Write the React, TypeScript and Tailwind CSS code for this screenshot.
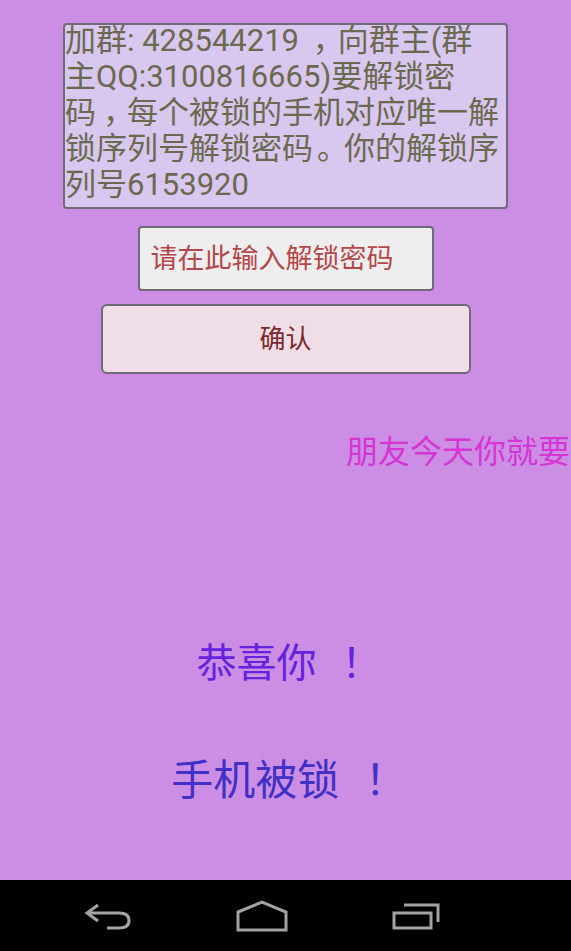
import React from "react";

const cjk = { fontFamily: '"Roboto", "Noto Sans CJK SC", sans-serif' };

function BackIcon() {
  return (
    <svg width="60" height="40" viewBox="0 0 60 40" fill="none" stroke="#a3a3a3" strokeWidth="3">
      <path d="M8 17 L40 17 Q50 17 50 24.5 Q50 32 40 32 L28 32" />
      <path d="M19 9 L8 17 L19 25" />
    </svg>
  );
}

function HomeIcon() {
  return (
    <svg width="60" height="40" viewBox="0 0 60 40" fill="none" stroke="#a3a3a3" strokeWidth="3">
      <path d="M6 16 L30 6 L54 16 L54 34 L6 34 Z" />
    </svg>
  );
}

function RecentsIcon() {
  return (
    <svg width="60" height="40" viewBox="0 0 60 40" fill="none" stroke="#a3a3a3" strokeWidth="3">
      <rect x="9" y="17" width="37" height="15" />
      <path d="M19 9 L53 9 L53 26" />
    </svg>
  );
}

export default function App() {
  return (
    <div className="flex h-[951px] w-[571px] flex-col overflow-hidden bg-[#cc8ee4]" style={cjk}>
      <div className="flex flex-1 flex-col items-center">
        {/* message box */}
        <div className="mt-[23px] h-[186px] w-[445px] overflow-hidden rounded-[4px] border-2 border-[#6e6a78] bg-[#d8c7ef] text-[31px] leading-[36px] text-[#6b6a4f]">
          <div className="-mt-[2px]">
            <div className="whitespace-nowrap">
              加群: 428544219 <span className="relative left-[6px]">，</span>向群主(群
            </div>
            <div className="whitespace-nowrap">主QQ:3100816665)要解锁密</div>
            <div className="whitespace-nowrap">
              码<span className="relative left-[7px]">，</span>每个被锁的手机对应唯一解
            </div>
            <div className="whitespace-nowrap">
              锁序列号解锁密码<span className="relative left-[4px]">。</span>你的解锁序
            </div>
            <div className="whitespace-nowrap">列号6153920</div>
          </div>
        </div>

        {/* password input */}
        <input
          className="mt-[17px] h-[65px] w-[296px] rounded-[4px] border-2 border-[#6e6a78] bg-[#efeeee] pl-[11px] text-[27px] text-[#7b2b2b] outline-none placeholder:text-[#b5474a]"
          placeholder="请在此输入解锁密码"
          style={cjk}
        />

        {/* confirm */}
        <button className="mt-[13px] h-[70px] w-[370px] rounded-[6px] border-2 border-[#6e6a78] bg-[#efdde7] text-[26px] text-[#7b2b2b]">
          确认
        </button>

        {/* scrolling line */}
        <div className="mt-[58px] w-full overflow-hidden whitespace-nowrap pl-[346px] text-[32px] leading-[40px] text-[#d535d5]">
          朋友今天你就要
        </div>

        <div className="mt-[168px] text-[40px] leading-[48px] text-[#6622dd]">
          恭喜你 <span className="relative left-[7px] ml-[8px]">！</span>
        </div>
        <div className="mt-[68px] text-[42px] leading-[50px] text-[#4030c6]">
          手机被锁 <span className="relative left-[7px] ml-[8px]">！</span>
        </div>
      </div>

      {/* nav bar */}
      <div className="flex h-[71px] items-center gap-[93px] bg-black pl-[79px]">
        <BackIcon />
        <HomeIcon />
        <RecentsIcon />
      </div>
    </div>
  );
}
